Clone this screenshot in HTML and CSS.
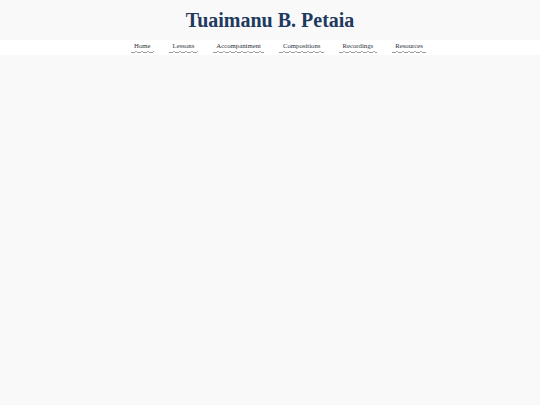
FILE: index.html
```html
<!DOCTYPE html>
<html>
<head>
<meta charset="utf-8">
<title>Tuaimanu B. Petaia</title>
<link rel="stylesheet" href="styles.css">
</head>
<body>
<header class="site-header">
  <h1 class="site-title">Tuaimanu B. Petaia</h1>
</header>
<nav class="site-nav">
  <a class="nav-link" href="#">Home</a>
  <a class="nav-link" href="#">Lessons</a>
  <a class="nav-link" href="#">Accompaniment</a>
  <a class="nav-link" href="#">Compositions</a>
  <a class="nav-link" href="#">Recordings</a>
  <a class="nav-link" href="#">Resources</a>
</nav>
</body>
</html>
```
FILE: styles.css
```css
html, body {
  margin: 0;
  padding: 0;
  background: #f9f9f9;
  font-family: "Liberation Serif", "Times New Roman", serif;
}
.site-header {
  height: 40px;
  display: flex;
  align-items: center;
  justify-content: center;
}
.site-title {
  margin: 0;
  font-size: 20px;
  line-height: 24px;
  font-weight: bold;
  color: #1e3a5f;
}
.site-nav {
  background: #ffffff;
  height: 15px;
  display: flex;
  justify-content: center;
  align-items: flex-start;
  gap: 15px;
  padding-left: 17px;
}
.nav-link {
  display: block;
  font-size: 6.75px;
  line-height: 8px;
  color: #2a2f3a;
  text-decoration: none;
  padding: 2px 3.5px 3px;
  background-image:
    repeating-linear-gradient(90deg, #9a9a9a 0 4px, transparent 4px 6px),
    repeating-linear-gradient(90deg, transparent 0 4px, #b0b0b0 4px 6px);
  background-size: 100% 1px, 100% 1px;
  background-position: 0 100%, 0 calc(100% - 1px);
  background-repeat: no-repeat;
}
```
